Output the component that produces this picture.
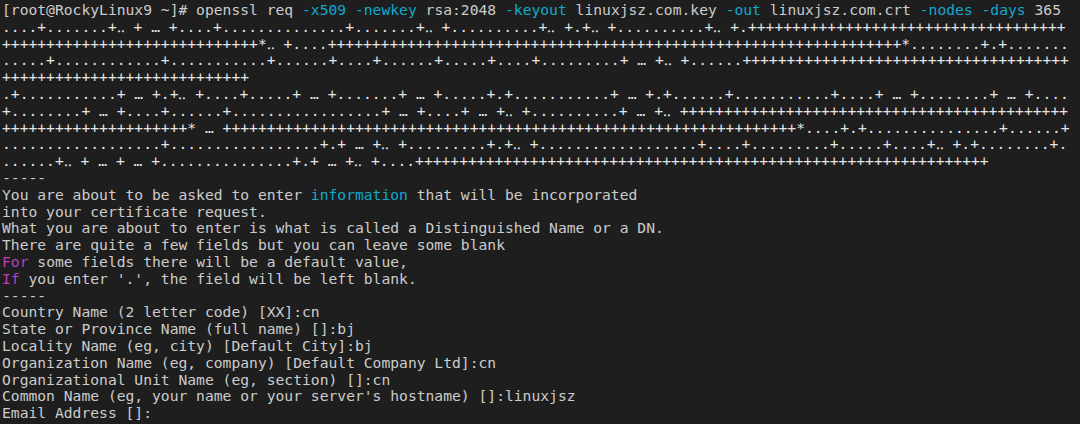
import React from 'react';

const p = (n: number) => '+'.repeat(n);
const d = (n: number) => '.'.repeat(n);

// openssl key generation progress, wrapped at the terminal width
const progress: string[] = [
  '....+.......+..+...+....+' + d(14) + '+.......+..+' + d(10) + '+..+.+..+' + d(10) + '+..+.' + p(36),
  p(29) + '*..+....' + p(65) + '*' + d(8) + '+.+' + d(7),
  '.....+' + d(12) + '+' + d(11) + '+......+....+......+.....+....+' + d(9) + '+...+..+......' + p(37),
  p(28),
  '.+' + d(11) + '+...+.+..+....+.....+...+.......+...+.....+.+' + d(11) + '+...+.+......+' + d(11) + '+....+...+........+...+....',
  '+' + d(8) + '+...+....+......+' + d(17) + '+...+....+...+..+' + d(10) + '+...+..' + p(44),
  p(21) + '*...' + p(65) + '*....+.+' + d(15) + '+' + d(6) + '+',
  d(18) + '+' + d(17) + '+.+...+..+' + d(9) + '+.+..+' + d(18) + '+....+' + d(9) + '+.....+....+..+.+' + d(8) + '+.',
  d(6) + '+..+...+...+' + d(15) + '+.+...+..+....' + p(65),
];

const ligate = (s: string) =>
  s.replace(/(?<!\.)\.\.\.(?!\.)/g, ' \u2026 ').replace(/(?<!\.)\.\.(?!\.)/g, '\u2025 ');

const Cyan: React.FC<{ children: React.ReactNode }> = ({ children }) => (
  <span className="text-[#11a8cd]">{children}</span>
);

const Magenta: React.FC<{ children: React.ReactNode }> = ({ children }) => (
  <span className="text-[#bc3fbc]">{children}</span>
);

const fields = [
  'Country Name (2 letter code) [XX]:cn',
  'State or Province Name (full name) []:bj',
  'Locality Name (eg, city) [Default City]:bj',
  'Organization Name (eg, company) [Default Company Ltd]:cn',
  'Organizational Unit Name (eg, section) []:cn',
  "Common Name (eg, your name or your server's hostname) []:linuxjsz",
  'Email Address []:',
];

const App: React.FC = () => {
  return (
    <div
      className="w-full h-[424px] overflow-hidden bg-[#1e1e1e] text-[#cccccc] pt-[2px] pl-[2px] text-[14.67px] leading-[16.8px] whitespace-pre"
      style={{ fontFamily: '"DejaVu Sans Mono", "Liberation Mono", monospace' }}
    >
      <div>
        [root@RockyLinux9 ~]# openssl req <Cyan>-x509</Cyan> <Cyan>-newkey</Cyan> rsa:2048{' '}
        <Cyan>-keyout</Cyan> linuxjsz.com.key <Cyan>-out</Cyan> linuxjsz.com.crt <Cyan>-nodes</Cyan>{' '}
        <Cyan>-days</Cyan> 365
      </div>
      {progress.map((line, i) => (
        <div key={i} className="text-[#e5e5e5]">{ligate(line)}</div>
      ))}
      <div>-----</div>
      <div>
        You are about to be asked to enter <Cyan>information</Cyan> that will be incorporated
      </div>
      <div>into your certificate request.</div>
      <div>What you are about to enter is what is called a Distinguished Name or a DN.</div>
      <div>There are quite a few fields but you can leave some blank</div>
      <div>
        <Magenta>For</Magenta> some fields there will be a default value,
      </div>
      <div>
        <Magenta>If</Magenta> you enter '.', the field will be left blank.
      </div>
      <div>-----</div>
      {fields.map((f) => (
        <div key={f}>{f}</div>
      ))}
    </div>
  );
};

export default App;
